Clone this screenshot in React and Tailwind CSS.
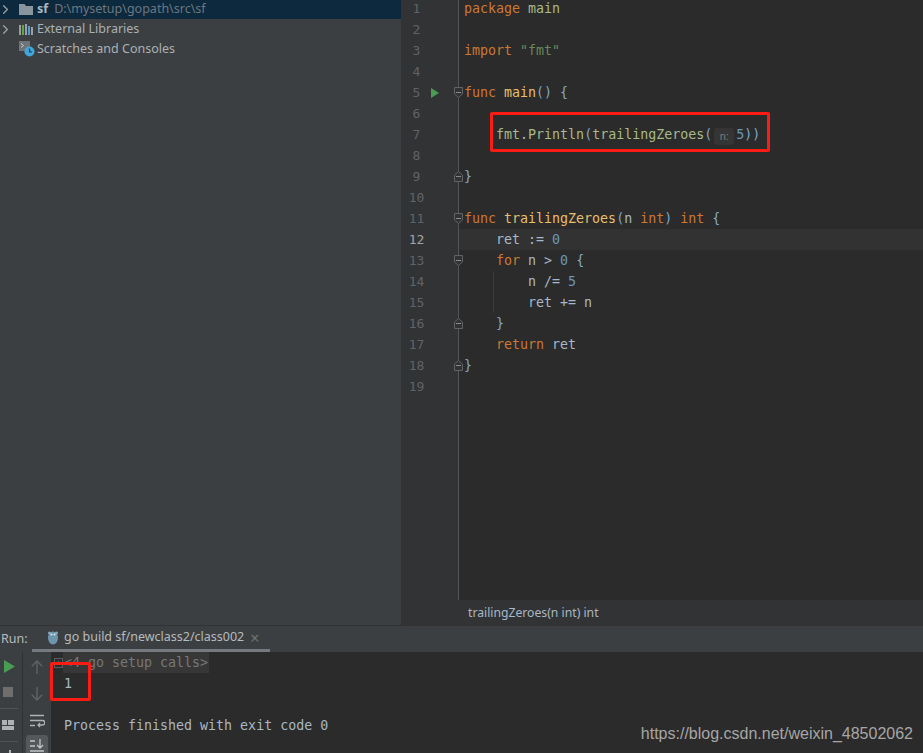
import { ChevronRight } from "lucide-react";

const mono = "font-['DejaVu_Sans_Mono',monospace]";
const K = ({ children }) => <span className="text-[#cc7832]">{children}</span>;
const F = ({ children }) => <span className="text-[#e8bf6a]">{children}</span>;
const N = ({ children }) => <span className="text-[#6897bb]">{children}</span>;
const B = ({ children }) => <span className="text-[#7fa7c8]">{children}</span>;
const G = ({ children }) => <span className="text-[#a8b98a]">{children}</span>;

const lines = [
  <><K>package</K> <G>main</G></>,
  null,
  <><K>import</K> <span className="text-[#6a8759]">"fmt"</span></>,
  null,
  <><K>func</K> <F>main</F><B>()</B> <B>{"{"}</B></>,
  null,
  <>    <G>fmt</G>.<G>Println</G><B>(</B><G>trailingZeroes</G><B>(</B><span className="mx-[2px] inline-flex h-[17px] w-[20px] items-center justify-center rounded-[3px] bg-[#353535] align-[-1px] font-['Liberation_Sans',sans-serif] text-[11px] text-[#787878]">n:</span><N>5</N><B>))</B></>,
  null,
  <B>{"}"}</B>,
  null,
  <><K>func</K> <F>trailingZeroes</F><B>(</B>n <K>int</K><B>)</B> <K>int</K> <B>{"{"}</B></>,
  <>    ret := <N>0</N></>,
  <>    <K>for</K> n &gt; <N>0</N> <B>{"{"}</B></>,
  <>        n /= <N>5</N></>,
  <>        ret += n</>,
  <>    <B>{"}"}</B></>,
  <>    <K>return</K> ret</>,
  <B>{"}"}</B>,
  null,
];

// fold markers in the gutter: line number -> opening or closing
const folds = { 5: "open", 9: "close", 11: "open", 13: "open", 16: "close", 18: "close" };

const Fold = ({ type }) => (
  <svg width="9" height="11" viewBox="0 0 9 11" className="shrink-0" fill="#313335" stroke="#606366">
    {type === "open" ? <path d="M.5.5h8v6.5l-4 3.5-4-3.5z" /> : <path d="M.5 10.5h8V4l-4-3.5L.5 4z" />}
    <path d="M2 5.5h5" stroke="#8a8d8f" />
  </svg>
);

const FolderIcon = () => (
  <svg width="14" height="11" viewBox="0 0 14 11">
    <path d="M0 0h5.5l1.5 2h7v9H0z" fill="#88959f" />
  </svg>
);

const LibIcon = () => (
  <svg width="14" height="11" viewBox="0 0 14 11">
    <rect x="0" y="1" width="2" height="10" fill="#9aa0a3" />
    <rect x="3" y="1" width="2" height="10" fill="#62a544" />
    <rect x="6" y="0" width="2" height="11" fill="#9aa0a3" />
    <rect x="9" y="2" width="2" height="9" fill="#4a9fd0" />
    <rect x="12" y="3" width="2" height="8" fill="#9aa0a3" />
  </svg>
);

const ScratchIcon = () => (
  <svg width="16" height="16" viewBox="0 0 16 16">
    <rect x="0" y="0" width="11" height="10" fill="#6e7578" />
    <path d="M2 2.5 4.5 4.5 2 6.5" fill="none" stroke="#c8c8c8" />
    <circle cx="10.5" cy="10.5" r="5" fill="#3fa7dc" />
    <path d="M10.5 7.5v3.3h2.4" fill="none" stroke="#20455a" strokeWidth="1.2" />
  </svg>
);

const Tree = () => (
  <aside className="w-[401px] shrink-0 bg-[#3c3f41] font-['Noto_Sans',sans-serif] text-[12.5px] text-[#a9b1b5]">
    <div className="flex h-[19px] items-center bg-[#0d293e]">
      <ChevronRight size={15} strokeWidth={2} className="ml-[-2px] text-[#9ba3a7]" />
      <span className="ml-[6px] flex"><FolderIcon /></span>
      <span className="ml-[4px] font-bold text-[#a9b7c0]">sf</span>
      <span className="ml-[6px] text-[#6a7780]">D:\mysetup\gopath\src\sf</span>
    </div>
    <div className="flex h-[20px] items-center">
      <ChevronRight size={15} strokeWidth={2} className="ml-[-2px] text-[#9ba3a7]" />
      <span className="ml-[6px] flex"><LibIcon /></span>
      <span className="ml-[4px]">External Libraries</span>
    </div>
    <div className="flex h-[20px] items-center">
      <span className="ml-[19px] flex"><ScratchIcon /></span>
      <span className="ml-[2px]">Scratches and Consoles</span>
    </div>
  </aside>
);

const Editor = () => (
  <main className="flex min-w-0 flex-1 flex-col border-l border-[#323232] bg-[#2b2b2b]">
    <div className="flex min-h-0 flex-1">
      <div className={`w-[57px] shrink-0 border-r border-[#555555] bg-[#313335] text-[13px] leading-[21px] text-[#606366] ${mono}`}>
        <div className="mt-[-2px]">
          {lines.map((_, i) => (
            <div key={i} className={`flex h-[21px] items-center ${i === 11 ? "text-[#a4a3a3]" : ""}`}>
              <span className="w-[28px] shrink-0 pl-[1px] text-center">{i + 1}</span>
              <span className="flex w-[10px] shrink-0 justify-center">
                {i === 4 && (
                  <svg width="8" height="10" viewBox="0 0 8 10"><path d="M0 0l8 5-8 5z" fill="#499c54" /></svg>
                )}
              </span>
              <span className="ml-[14px] flex shrink-0">{folds[i + 1] && <Fold type={folds[i + 1]} />}</span>
            </div>
          ))}
        </div>
      </div>
      <div className={`min-w-0 flex-1 whitespace-pre text-[13.3px] leading-[21px] text-[#a9b7c6] ${mono}`}>
        <div className="mt-[-2px]">
          {lines.map((l, i) => (
            <div key={i} className={`relative h-[21px] pl-[5px] ${i === 11 ? "bg-[#323232]" : ""}`}>
              {(i === 13 || i === 14) && <span className="absolute left-[34px] top-0 h-full w-px bg-[#3b3b3b]" />}
              {l}
            </div>
          ))}
        </div>
      </div>
    </div>
    <div className="flex h-[25px] shrink-0 items-center border-t border-[#323232] bg-[#313335] pl-[66px] font-['Noto_Sans',sans-serif] text-[12.2px] text-[#a9b7c6]">
      trailingZeroes(n int) int
    </div>
  </main>
);

const RunTabs = () => (
  <div className="flex h-[27px] shrink-0 items-stretch border-t border-[#323232] bg-[#3c3f41] font-['Noto_Sans',sans-serif] text-[12.5px] text-[#b4bbbf]">
    <span className="flex w-[32px] items-center pl-[1px]">Run:</span>
    <div className="flex w-[238px] items-center border-b-[3px] border-[#747a80] pl-[15px]">
      <svg width="12" height="15" viewBox="0 0 12 15" className="shrink-0">
        <ellipse cx="6" cy="8" rx="5" ry="6.5" fill="#6d96ad" />
        <circle cx="2.5" cy="3" r="1.6" fill="#7fa5ba" />
        <circle cx="9.5" cy="3" r="1.6" fill="#7fa5ba" />
        <circle cx="4.5" cy="4.5" r="1" fill="#dfe6ea" />
        <circle cx="7.5" cy="4.5" r="1" fill="#dfe6ea" />
      </svg>
      <span className="ml-[5px] whitespace-nowrap">go build sf/newclass2/class002</span>
      <span className="ml-[6px] text-[16px] leading-none text-[#6f7375]">×</span>
    </div>
  </div>
);

const Console = () => (
  <div className="flex min-h-0 flex-1">
    <div className="flex w-[23px] shrink-0 flex-col border-r border-[#323232] bg-[#3c3f41]">
      <svg width="11" height="13" viewBox="0 0 11 13" className="ml-[4px] mt-[8px]"><path d="M0 0l11 6.5-11 6.5z" fill="#499c54" /></svg>
      <span className="ml-[3px] mt-[14px] h-[10px] w-[10px] shrink-0 bg-[#6e6e6e]" />
      <span className="mt-[11px] h-px w-[18px] shrink-0 bg-[#515456]" />
      <svg width="12" height="10" viewBox="0 0 12 10" className="ml-[2px] mt-[11px] shrink-0">
        <rect x="0" y="0" width="5" height="5" fill="#afb1b3" />
        <rect x="6" y="0" width="6" height="5" fill="#afb1b3" />
        <rect x="0" y="6" width="12" height="4" fill="#afb1b3" />
      </svg>
      <span className="mt-[11px] h-px w-[18px] shrink-0 bg-[#515456]" />
      <span className="ml-[9px] mt-[8px] h-[3px] w-[2px] shrink-0 bg-[#afb1b3]" />
    </div>
    <div className="flex w-[28px] shrink-0 flex-col items-center bg-[#3c3f41]">
      <svg width="12" height="14" viewBox="0 0 12 14" className="mt-[8px] shrink-0" fill="none" stroke="#5d6163" strokeWidth="1.5"><path d="M6 14V1M.8 6.2 6 1l5.2 5.2" /></svg>
      <svg width="12" height="14" viewBox="0 0 12 14" className="mt-[13px] shrink-0" fill="none" stroke="#5d6163" strokeWidth="1.5"><path d="M6 0v13M.8 7.8 6 13l5.2-5.2" /></svg>
      <svg width="15" height="14" viewBox="0 0 15 14" className="mt-[13px] shrink-0" fill="none" stroke="#afb1b3" strokeWidth="1.3"><path d="M0 1.5h14M0 6.5h12.5a1.8 1.8 0 0 1 0 4.5H8M10 9l-2 2 2 2M0 11.5h5" /></svg>
      <span className="mt-[7px] flex h-[22px] w-[22px] shrink-0 items-start justify-center rounded-[3px] bg-[#54585b] pt-[4px]">
        <svg width="14" height="14" viewBox="0 0 14 14" fill="none" stroke="#c2c4c6" strokeWidth="1.3"><path d="M0 2h5M0 7h5M0 12h14M10 0v9M7 6l3 3 3-3" /></svg>
      </span>
    </div>
    <div className={`min-w-0 flex-1 whitespace-pre bg-[#2b2b2b] text-[13.3px] leading-[21px] text-[#a9b7c6] ${mono}`}>
      <div className="flex h-[21px] items-center">
        <span className="ml-[3px] flex h-[10px] w-[9px] items-center justify-center border border-[#5a5d5f] text-[8px] leading-none text-[#808080]">+</span>
        <span className="bg-[#373737] px-px text-[#787878]">&lt;4 go setup calls&gt;</span>
      </div>
      <div className="h-[21px] pl-[13px]">1</div>
      <div className="h-[21px]" />
      <div className="h-[21px] pl-[13px]">Process finished with exit code 0</div>
    </div>
  </div>
);

export default function App() {
  return (
    <div className="relative flex h-[753px] w-[923px] flex-col overflow-hidden bg-[#2b2b2b]">
      <div className="flex h-[625px] shrink-0">
        <Tree />
        <Editor />
      </div>
      <RunTabs />
      <Console />

      {/* red annotation boxes pasted over the screenshot */}
      <div className="absolute left-[490px] top-[112px] h-[40px] w-[280px] rounded-[2px] border-[3px] border-[#fb1d14]" />
      <div className="absolute left-[50px] top-[662px] h-[39px] w-[41px] rounded-[2px] border-[3px] border-[#fb1d14]" />
      <span className="absolute right-[10px] top-[724px] font-['Liberation_Sans',sans-serif] text-[16px] leading-[19px] text-[#a6a6a6]">
        https://blog.csdn.net/weixin_48502062
      </span>
    </div>
  );
}
